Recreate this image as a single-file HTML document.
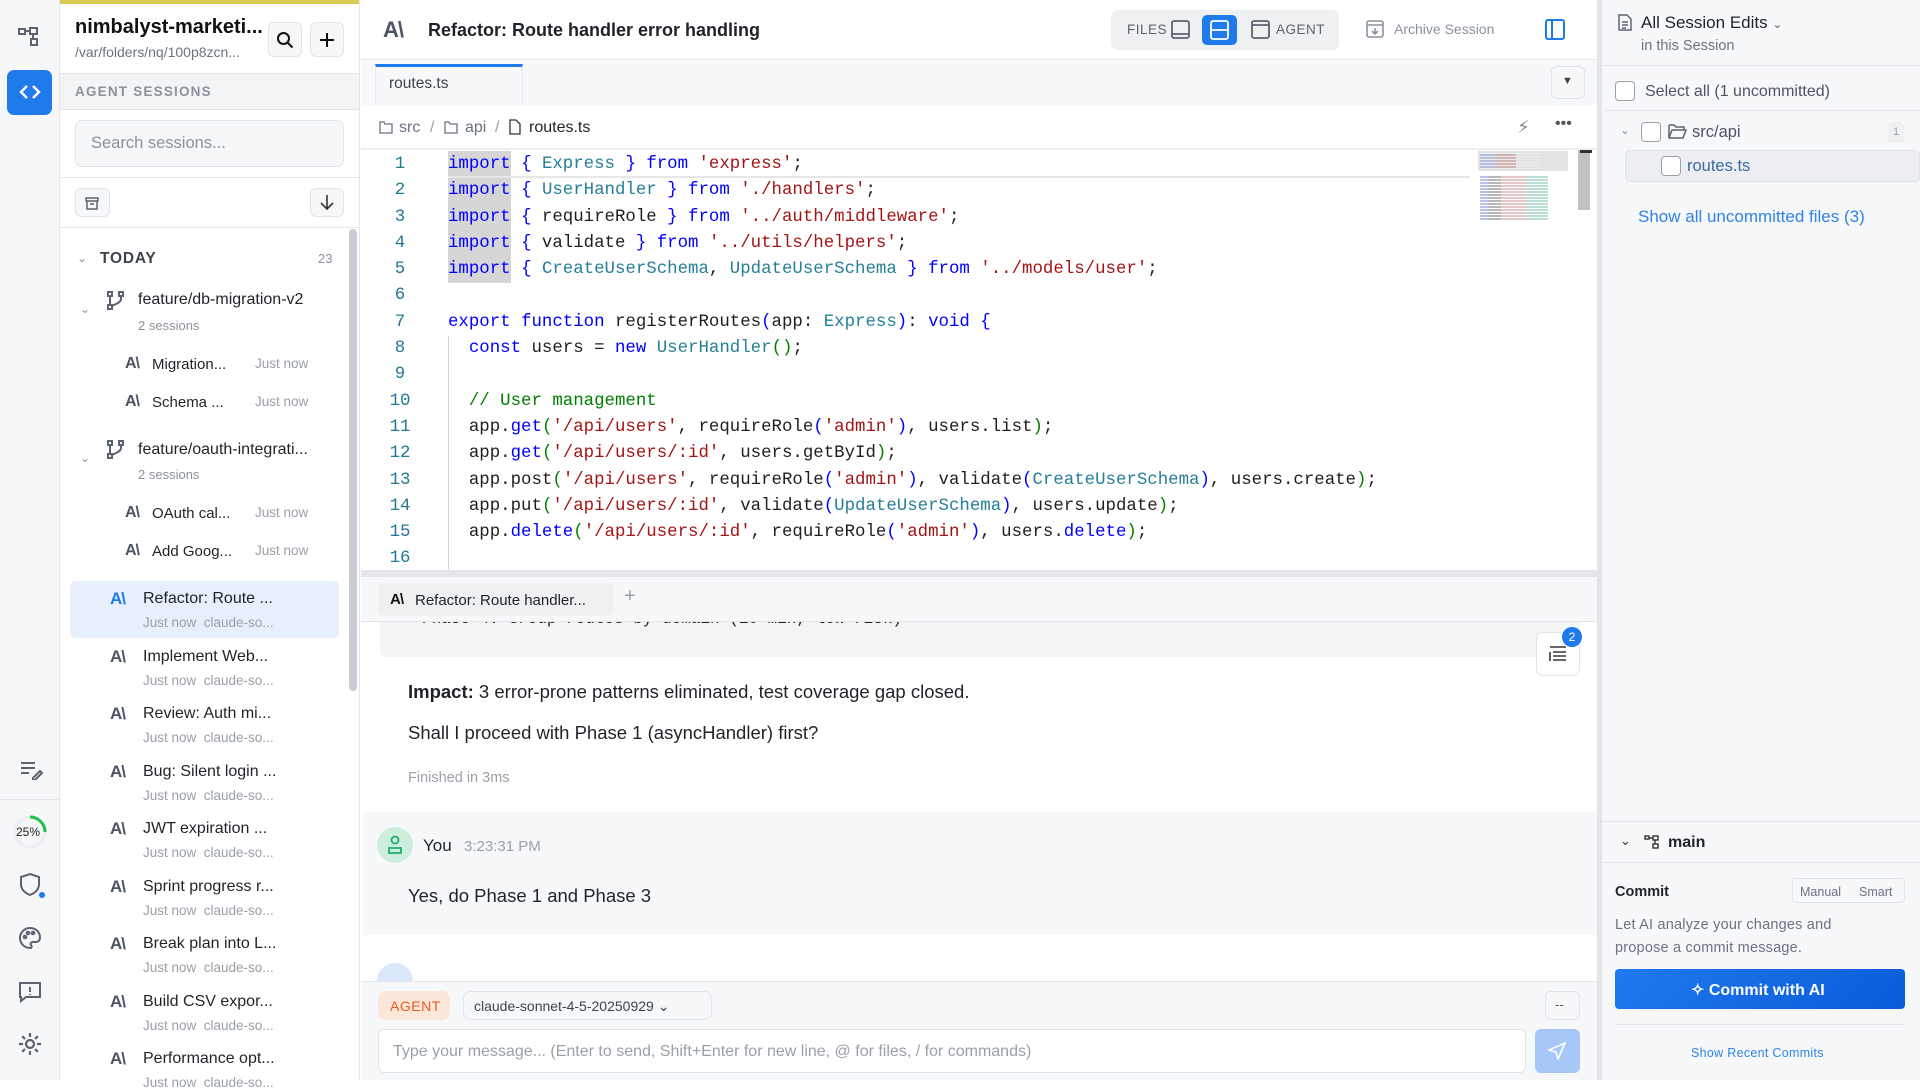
<!DOCTYPE html>
<html><head><meta charset="utf-8"><style>
*{box-sizing:border-box;margin:0;padding:0}
body{width:1920px;height:1080px;overflow:hidden;font-family:"Liberation Sans",sans-serif;color:#1f2328;background:#fff;position:relative}
.a{position:absolute}
.t{position:absolute;white-space:nowrap}
.anth{font-weight:bold;letter-spacing:-1px;color:#4b5563}
.code{font-family:"Liberation Mono",monospace;font-size:17.4px;color:#1f1f1f}
.k{color:#0000ff}.s{color:#a31515}.ty{color:#267f99}.c{color:#008000}.ln{color:#237893}
.btn{position:absolute;border:1px solid #e1e4e8;border-radius:6px;background:#f6f7f9}
.gray{color:#8b929c}
</style></head><body>
<!-- left rail -->
<div class="a" style="left:0;top:0;width:60px;height:1080px;background:#f6f7f9;border-right:1px solid #e3e5e8"></div>
<svg class="a" style="left:18px;top:26px" width="24" height="22" viewBox="0 0 24 22" fill="none" stroke="#5b6270" stroke-width="2"><rect x="1" y="3" width="6" height="5"/><rect x="12" y="2" width="7" height="6"/><rect x="13" y="13" width="6" height="6"/><path d="M7 5h5M15 8v5"/></svg>
<div class="a" style="left:7px;top:70px;width:45px;height:45px;background:#1f7aec;border-radius:7px"></div>
<svg class="a" style="left:19px;top:82px" width="22" height="20" viewBox="0 0 22 20" fill="none" stroke="#fff" stroke-width="2.4"><path d="M8 4l-6 6 6 6M14 4l6 6-6 6"/></svg>
<svg class="a" style="left:19px;top:760px" width="24" height="20" viewBox="0 0 24 20" fill="none" stroke="#5b6270" stroke-width="2"><path d="M2 3h14M2 8h14M2 13h8M14 18l7-7 2 2-7 7h-2z"/></svg>
<div class="a" style="left:0;top:799px;width:60px;height:1px;background:#e3e5e8"></div>
<svg class="a" style="left:12px;top:814px" width="36" height="36" viewBox="0 0 36 36"><circle cx="18" cy="18" r="15" fill="none" stroke="#eceef1" stroke-width="3"/><path d="M18 3a15 15 0 0 1 15 15" fill="none" stroke="#1fbf4a" stroke-width="3"/></svg>
<div class="t" style="left:16px;top:825px;font-size:12px;color:#222">25%</div>
<svg class="a" style="left:19px;top:872px" width="24" height="26" viewBox="0 0 24 26" fill="none" stroke="#5b6270" stroke-width="2"><path d="M11 2l9 3v7c0 6-4 9-9 11-5-2-9-5-9-11V5z"/></svg>
<div class="a" style="left:39px;top:892px;width:6px;height:6px;border-radius:50%;background:#1f7aec"></div>
<svg class="a" style="left:18px;top:926px" width="24" height="24" viewBox="0 0 24 24" fill="none" stroke="#5b6270" stroke-width="2"><path d="M12 2a10 10 0 0 0 0 20c2 0 2-2 1-3s0-3 2-3h3a4 4 0 0 0 4-4c0-6-4-10-10-10z"/><circle cx="7" cy="11" r="1.3"/><circle cx="10" cy="7" r="1.3"/><circle cx="15" cy="7" r="1.3"/></svg>
<svg class="a" style="left:18px;top:980px" width="24" height="24" viewBox="0 0 24 24" fill="none" stroke="#5b6270" stroke-width="2"><path d="M2 3h20v14H8l-5 4v-4H2z"/><path d="M12 7v5M12 14v1"/></svg>
<svg class="a" style="left:18px;top:1032px" width="24" height="24" viewBox="0 0 24 24" fill="none" stroke="#5b6270" stroke-width="2.2"><circle cx="12" cy="12" r="4"/><path d="M12 1v4M12 19v4M1 12h4M19 12h4M4.2 4.2l2.8 2.8M17 17l2.8 2.8M4.2 19.8L7 17M17 7l2.8-2.8"/></svg>

<!-- sidebar -->
<div class="a" style="left:60px;top:0;width:300px;height:1080px;background:#fff;border-right:1px solid #e3e5e8"></div>
<div class="a" style="left:60px;top:0;width:299px;height:4px;background:#d8cc55"></div>
<div class="t" style="left:75px;top:16px;font-size:20px;font-weight:bold;color:#111">nimbalyst-marketi...</div>
<div class="t" style="left:75px;top:44px;font-size:14px;color:#6b7280">/var/folders/nq/100p8zcn...</div>
<div class="btn" style="left:268px;top:22px;width:34px;height:35px"></div>
<svg class="a" style="left:276px;top:31px" width="18" height="18" viewBox="0 0 18 18" fill="none" stroke="#111" stroke-width="2"><circle cx="7.5" cy="7.5" r="5.5"/><path d="M11.5 11.5l5 5"/></svg>
<div class="btn" style="left:310px;top:22px;width:34px;height:35px"></div>
<svg class="a" style="left:318px;top:31px" width="18" height="18" viewBox="0 0 18 18" stroke="#111" stroke-width="2"><path d="M9 2v14M2 9h14"/></svg>
<div class="a" style="left:60px;top:73px;width:299px;height:37px;background:#f3f4f6;border-top:1px solid #e3e5e8;border-bottom:1px solid #e3e5e8"></div>
<div class="t" style="left:75px;top:84px;font-size:13.5px;font-weight:bold;color:#8b929c;letter-spacing:1.2px">AGENT SESSIONS</div>
<div class="a" style="left:75px;top:120px;width:269px;height:47px;border:1px solid #e1e4e8;border-radius:7px;background:#f6f7f9"></div>
<div class="t" style="left:91px;top:134px;font-size:16.5px;color:#8b929c">Search sessions...</div>
<div class="a" style="left:60px;top:177px;width:299px;height:1px;background:#e3e5e8"></div>
<div class="btn" style="left:75px;top:188px;width:35px;height:29px"></div>
<svg class="a" style="left:85px;top:196px" width="14" height="14" viewBox="0 0 14 14" fill="none" stroke="#5b6270" stroke-width="1.5"><path d="M1 2h12v3H1zM2 5v8h10V5M5 8h4"/></svg>
<div class="btn" style="left:310px;top:188px;width:34px;height:29px"></div>
<svg class="a" style="left:319px;top:194px" width="16" height="17" viewBox="0 0 16 17" fill="none" stroke="#333" stroke-width="1.6"><path d="M8 1v14M2 9l6 6 6-6"/></svg>
<div class="a" style="left:60px;top:227px;width:299px;height:1px;background:#e3e5e8"></div>
<div class="a" style="left:349px;top:229px;width:8px;height:462px;background:#c9cdd3;border-radius:4px"></div>

<div class="t" style="left:77px;top:251px;font-size:12px;color:#8b929c">⌄</div>
<div class="t" style="left:100px;top:250px;font-size:15.5px;font-weight:bold;color:#3d434c;letter-spacing:.8px">TODAY</div>
<div class="t" style="left:318px;top:251px;font-size:13px;color:#8b929c">23</div>

<svg class="a" style="left:107px;top:291px" width="18" height="19" viewBox="0 0 18 19" fill="none" stroke="#5b6270" stroke-width="2"><rect x="1" y="1" width="4" height="4"/><rect x="12" y="1" width="4" height="4"/><rect x="1" y="14" width="4" height="4"/><path d="M3 5v9M14 5v3c0 3-3 4-9 7"/></svg>
<div class="t" style="left:80px;top:302px;font-size:12px;color:#8b929c">⌄</div>
<div class="t" style="left:138px;top:291px;font-size:16px;color:#1f2328">feature/db-migration-v2</div>
<div class="t" style="left:138px;top:318px;font-size:13px;color:#8b929c">2 sessions</div>
<div class="t anth" style="left:125px;top:355px;font-size:16px">A\</div>
<div class="t" style="left:152px;top:356px;font-size:15px">Migration...</div>
<div class="t" style="left:255px;top:356px;font-size:13.5px;color:#9aa0a8">Just now</div>
<div class="t anth" style="left:125px;top:393px;font-size:16px">A\</div>
<div class="t" style="left:152px;top:394px;font-size:15px">Schema ...</div>
<div class="t" style="left:255px;top:394px;font-size:13.5px;color:#9aa0a8">Just now</div>

<svg class="a" style="left:107px;top:440px" width="18" height="19" viewBox="0 0 18 19" fill="none" stroke="#5b6270" stroke-width="2"><rect x="1" y="1" width="4" height="4"/><rect x="12" y="1" width="4" height="4"/><rect x="1" y="14" width="4" height="4"/><path d="M3 5v9M14 5v3c0 3-3 4-9 7"/></svg>
<div class="t" style="left:80px;top:451px;font-size:12px;color:#8b929c">⌄</div>
<div class="t" style="left:138px;top:441px;font-size:16px;color:#1f2328">feature/oauth-integrati...</div>
<div class="t" style="left:138px;top:467px;font-size:13px;color:#8b929c">2 sessions</div>
<div class="t anth" style="left:125px;top:504px;font-size:16px">A\</div>
<div class="t" style="left:152px;top:505px;font-size:15px">OAuth cal...</div>
<div class="t" style="left:255px;top:505px;font-size:13.5px;color:#9aa0a8">Just now</div>
<div class="t anth" style="left:125px;top:542px;font-size:16px">A\</div>
<div class="t" style="left:152px;top:543px;font-size:15px">Add Goog...</div>
<div class="t" style="left:255px;top:543px;font-size:13.5px;color:#9aa0a8">Just now</div>

<div class="a" style="left:70px;top:581px;width:269px;height:57px;background:#e7effc;border-radius:6px"></div>
<div id="list"></div>

<!-- main header -->
<div class="a" style="left:361px;top:59px;width:1236px;height:1px;background:#e3e5e8"></div>
<div class="t anth" style="left:383px;top:17px;font-size:22px;color:#4b5563">A\</div>
<div class="t" style="left:428px;top:20px;font-size:18px;font-weight:bold;color:#1f2328">Refactor: Route handler error handling</div>
<div class="a" style="left:1111px;top:10px;width:228px;height:40px;background:#eff0f2;border-radius:7px"></div>
<div class="t" style="left:1127px;top:22px;font-size:13.5px;color:#5b6270;letter-spacing:.5px">FILES</div>
<svg class="a" style="left:1171px;top:20px" width="19" height="19" viewBox="0 0 19 19" fill="none" stroke="#5b6270" stroke-width="1.8"><rect x="1" y="1" width="17" height="17" rx="2"/><path d="M1 14h17"/></svg>
<div class="a" style="left:1202px;top:15px;width:35px;height:30px;background:#1f7aec;border-radius:5px"></div>
<svg class="a" style="left:1210px;top:20px" width="19" height="20" viewBox="0 0 19 20" fill="none" stroke="#fff" stroke-width="1.8"><rect x="1" y="1" width="17" height="18" rx="2"/><path d="M1 10h17"/></svg>
<svg class="a" style="left:1251px;top:20px" width="19" height="19" viewBox="0 0 19 19" fill="none" stroke="#5b6270" stroke-width="1.8"><rect x="1" y="1" width="17" height="17" rx="2"/><path d="M1 5h17"/></svg>
<div class="t" style="left:1276px;top:22px;font-size:13.5px;color:#5b6270;letter-spacing:.5px">AGENT</div>
<svg class="a" style="left:1366px;top:20px" width="18" height="18" viewBox="0 0 18 18" fill="none" stroke="#8b929c" stroke-width="1.6"><rect x="1" y="1" width="16" height="16" rx="2"/><path d="M1 5h16M9 8v6M6 11l3 3 3-3"/></svg>
<div class="t" style="left:1394px;top:21px;font-size:14px;color:#8b929c">Archive Session</div>
<svg class="a" style="left:1545px;top:19px" width="20" height="21" viewBox="0 0 20 21" fill="none" stroke="#1f7aec" stroke-width="2"><rect x="1" y="1" width="18" height="19" rx="2"/><path d="M7 1v19"/></svg>

<!-- tab bar -->
<div class="a" style="left:361px;top:60px;width:1236px;height:45px;background:#f7f8fa"></div>
<div class="a" style="left:375px;top:64px;width:148px;height:41px;background:#f7f8fa;border-top:3px solid #1f7aec;border-left:1px solid #e8eaed;border-right:1px solid #e8eaed"></div>
<div class="t" style="left:389px;top:75px;font-size:15.5px;color:#3d434c">routes.ts</div>
<div class="btn" style="left:1551px;top:66px;width:34px;height:33px;background:#f7f8fa"></div>
<div class="t" style="left:1562px;top:75px;font-size:11px;color:#444">▼</div>
<!-- breadcrumb -->
<svg class="a" style="left:379px;top:120px" width="14" height="14" viewBox="0 0 14 14" fill="none" stroke="#6b7280" stroke-width="1.3"><path d="M1 2h4l1 2h7v9H1z"/></svg>
<div class="t" style="left:399px;top:119px;font-size:16px;color:#6b7280">src</div>
<div class="t" style="left:430px;top:119px;font-size:16px;color:#9aa0a8">/</div>
<svg class="a" style="left:444px;top:120px" width="14" height="14" viewBox="0 0 14 14" fill="none" stroke="#6b7280" stroke-width="1.3"><path d="M1 2h4l1 2h7v9H1z"/></svg>
<div class="t" style="left:465px;top:119px;font-size:16px;color:#6b7280">api</div>
<div class="t" style="left:495px;top:119px;font-size:16px;color:#9aa0a8">/</div>
<svg class="a" style="left:509px;top:119px" width="12" height="16" viewBox="0 0 12 16" fill="none" stroke="#333" stroke-width="1.3"><path d="M1 1h6l4 4v10H1z"/></svg>
<div class="t" style="left:529px;top:119px;font-size:16px;color:#1f2328">routes.ts</div>
<div class="t" style="left:1517px;top:117px;font-size:18px;color:#888">⚡︎</div>
<div class="t" style="left:1555px;top:115px;font-size:16px;color:#555">•••</div>
<div class="a" style="left:361px;top:148px;width:1236px;height:2px;background:#eceef1"></div>

<!-- code -->
<div class="a" style="left:448px;top:151px;width:63px;height:132px;background:#d6d6d6"></div>
<div class="a" style="left:448px;top:176px;width:1022px;height:2px;background:#e6e6e6"></div>
<div class="a" style="left:448px;top:336px;width:1px;height:234px;background:#d8d8d8"></div>
<div class="code a" style="left:380px;top:152px;line-height:26.3px">
<div class="ln" style="position:absolute;left:0;width:40px;text-align:center">1<br>2<br>3<br>4<br>5<br>6<br>7<br>8<br>9<br>10<br>11<br>12<br>13<br>14<br>15<br>16</div>
<pre class="code" style="position:absolute;left:68px;top:0;line-height:26.3px;margin:0"><span class="k">import</span> <span class="k">{</span> <span class="ty">Express</span> <span class="k">}</span> <span class="k">from</span> <span class="s">'express'</span>;
<span class="k">import</span> <span class="k">{</span> <span class="ty">UserHandler</span> <span class="k">}</span> <span class="k">from</span> <span class="s">'./handlers'</span>;
<span class="k">import</span> <span class="k">{</span> requireRole <span class="k">}</span> <span class="k">from</span> <span class="s">'../auth/middleware'</span>;
<span class="k">import</span> <span class="k">{</span> validate <span class="k">}</span> <span class="k">from</span> <span class="s">'../utils/helpers'</span>;
<span class="k">import</span> <span class="k">{</span> <span class="ty">CreateUserSchema</span>, <span class="ty">UpdateUserSchema</span> <span class="k">}</span> <span class="k">from</span> <span class="s">'../models/user'</span>;

<span class="k">export</span> <span class="k">function</span> registerRoutes<span class="k">(</span>app: <span class="ty">Express</span><span class="k">)</span>: <span class="k">void</span> <span class="k">{</span>
  <span class="k">const</span> users = <span class="k">new</span> <span class="ty">UserHandler</span><span class="c">()</span>;

  <span class="c">// User management</span>
  app.<span class="k">get</span><span class="c">(</span><span class="s">'/api/users'</span>, requireRole<span class="k">(</span><span class="s">'admin'</span><span class="k">)</span>, users.list<span class="c">)</span>;
  app.<span class="k">get</span><span class="c">(</span><span class="s">'/api/users/:id'</span>, users.getById<span class="c">)</span>;
  app.post<span class="c">(</span><span class="s">'/api/users'</span>, requireRole<span class="k">(</span><span class="s">'admin'</span><span class="k">)</span>, validate<span class="k">(</span><span class="ty">CreateUserSchema</span><span class="k">)</span>, users.create<span class="c">)</span>;
  app.put<span class="c">(</span><span class="s">'/api/users/:id'</span>, validate<span class="k">(</span><span class="ty">UpdateUserSchema</span><span class="k">)</span>, users.update<span class="c">)</span>;
  app.<span class="k">delete</span><span class="c">(</span><span class="s">'/api/users/:id'</span>, requireRole<span class="k">(</span><span class="s">'admin'</span><span class="k">)</span>, users.<span class="k">delete</span><span class="c">)</span>;
</pre></div>
<!-- minimap -->
<div class="a" style="left:1478px;top:151px;width:90px;height:20px;background:#e3e3e3"></div>
<div class="a" style="left:1480px;top:153px;width:60px;height:16px;opacity:.35;background:repeating-linear-gradient(#fff 0 1px,transparent 1px 3px),linear-gradient(90deg,#6a7ad8 0 25%,#b06060 25% 60%,transparent 60%)"></div>
<div class="a" style="left:1480px;top:175px;width:85px;height:45px;opacity:.35;background:repeating-linear-gradient(#fff 0 1px,transparent 1px 3px),linear-gradient(90deg,#3a4ad8 0 10%,#333 10% 25%,#b06060 25% 55%,#3aa080 55% 80%,transparent 80%)"></div>
<div class="a" style="left:1578px;top:150px;width:12px;height:60px;background:#c1c1c1"></div>
<div class="a" style="left:1580px;top:150px;width:12px;height:3px;background:#333"></div>

<!-- splitter -->
<div class="a" style="left:361px;top:570px;width:1236px;height:7px;background:#e3e5e8"></div>
<!-- chat tab bar -->
<div class="a" style="left:361px;top:577px;width:1236px;height:45px;background:#f7f8fa;border-bottom:1px solid #e3e5e8"></div>
<div class="a" style="left:378px;top:583px;width:235px;height:33px;background:#eff0f2;border-radius:5px"></div>
<div class="t anth" style="left:390px;top:591px;font-size:15px;color:#111">A\</div>
<div class="t" style="left:415px;top:592px;font-size:15px;color:#1f2328">Refactor: Route handler...</div>
<div class="t" style="left:624px;top:585px;font-size:20px;color:#9aa0a8">+</div>
<!-- chat body -->
<div class="a" style="left:380px;top:622px;width:1200px;height:35px;background:#f3f4f6;border-radius:0 0 6px 6px;overflow:hidden"><div class="t code" style="left:42px;top:-12px;font-size:16px">Phase 4: Group routes by domain (10 min, low risk)</div></div>
<div class="a" style="left:1536px;top:632px;width:44px;height:44px;background:#fff;border:1px solid #e1e4e8;border-radius:7px"></div>
<svg class="a" style="left:1549px;top:645px" width="18" height="18" viewBox="0 0 18 18" stroke="#333" stroke-width="1.6"><path d="M1 2h16M4 7h13M4 11h13M4 15h13M1 7v9"/></svg>
<div class="a" style="left:1562px;top:627px;width:20px;height:20px;border-radius:50%;background:#1f7aec;color:#fff;font-size:12px;text-align:center;line-height:20px">2</div>
<div class="t" style="left:408px;top:681px;font-size:18.5px;color:#1f2328"><b>Impact:</b> 3 error-prone patterns eliminated, test coverage gap closed.</div>
<div class="t" style="left:408px;top:722px;font-size:18.5px;color:#1f2328">Shall I proceed with Phase 1 (asyncHandler) first?</div>
<div class="t" style="left:408px;top:770px;font-size:14.5px;color:#9aa0a8">Finished in 3ms</div>
<div class="a" style="left:363px;top:812px;width:1234px;height:123px;background:#f7f8fa"></div>
<div class="a" style="left:377px;top:827px;width:36px;height:36px;border-radius:50%;background:#cdeedd"></div>
<svg class="a" style="left:386px;top:835px" width="18" height="20" viewBox="0 0 18 20" fill="none" stroke="#1fae67" stroke-width="1.8"><circle cx="9" cy="5" r="3.5"/><path d="M3 18v-5h12v5z"/></svg>
<div class="t" style="left:423px;top:836px;font-size:17px;color:#1f2328">You</div>
<div class="t" style="left:464px;top:838px;font-size:15px;color:#9aa0a8">3:23:31 PM</div>
<div class="t" style="left:408px;top:885px;font-size:18.5px;color:#1f2328">Yes, do Phase 1 and Phase 3</div>
<div class="a" style="left:377px;top:963px;width:36px;height:18px;border-radius:18px 18px 0 0;background:#dbe7fb;overflow:hidden"></div>
<!-- input area -->
<div class="a" style="left:361px;top:981px;width:1236px;height:99px;background:#f7f8fa;border-top:1px solid #e3e5e8"></div>
<div class="a" style="left:378px;top:991px;width:72px;height:29px;background:#fde7da;border-radius:8px"></div>
<div class="t" style="left:390px;top:998px;font-size:14px;color:#ef5a1f;letter-spacing:.5px">AGENT</div>
<div class="a" style="left:463px;top:991px;width:249px;height:29px;border:1px solid #e1e4e8;border-radius:8px"></div>
<div class="t" style="left:474px;top:998px;font-size:14px;color:#3d434c">claude-sonnet-4-5-20250929 ⌄</div>
<div class="a" style="left:1545px;top:991px;width:35px;height:29px;border:1px solid #e1e4e8;border-radius:6px;background:#f7f8fa"></div>
<div class="t" style="left:1555px;top:997px;font-size:13px;color:#555">--</div>
<div class="a" style="left:378px;top:1029px;width:1148px;height:44px;border:1px solid #e1e4e8;border-radius:6px;background:#fff"></div>
<div class="t" style="left:393px;top:1043px;font-size:16px;color:#9aa0a8">Type your message... (Enter to send, Shift+Enter for new line, @ for files, / for commands)</div>
<div class="a" style="left:1535px;top:1029px;width:45px;height:44px;background:#a7c8f7;border-radius:6px"></div>
<svg class="a" style="left:1548px;top:1042px" width="18" height="18" viewBox="0 0 18 18" fill="none" stroke="#fff" stroke-width="1.6"><path d="M17 1L1 8l7 2 2 7z"/></svg>

<!-- right panel -->
<div class="a" style="left:1597px;top:0;width:323px;height:1080px;background:#f7f8fa;border-left:5px solid #e3e5e8"></div>
<svg class="a" style="left:1618px;top:14px" width="14" height="17" viewBox="0 0 14 17" fill="none" stroke="#5b6270" stroke-width="1.5"><path d="M1 1h8l4 4v11H1zM4 8h6M4 11h6M4 14h4"/></svg>
<div class="t" style="left:1641px;top:13px;font-size:17px;color:#1f2328">All Session Edits <span style="font-size:12px;color:#666">⌄</span></div>
<div class="t" style="left:1641px;top:38px;font-size:14.5px;color:#6b7280">in this Session</div>
<div class="a" style="left:1602px;top:65px;width:318px;height:1px;background:#e3e5e8"></div>
<div class="a" style="left:1615px;top:81px;width:20px;height:20px;border:1.5px solid #9aa0a8;border-radius:4px;background:#fff"></div>
<div class="t" style="left:1645px;top:83px;font-size:16px;color:#4b5563">Select all (1 uncommitted)</div>
<div class="a" style="left:1605px;top:110px;width:315px;height:1px;background:#e3e5e8"></div>
<div class="t" style="left:1620px;top:123px;font-size:12px;color:#8b929c">⌄</div>
<div class="a" style="left:1641px;top:122px;width:20px;height:20px;border:1.5px solid #9aa0a8;border-radius:4px;background:#fff"></div>
<svg class="a" style="left:1668px;top:124px" width="19" height="15" viewBox="0 0 19 15" fill="none" stroke="#5b6270" stroke-width="1.5"><path d="M1 1h5l2 2h8v3M1 1v13h14l3-8H4L1 14"/></svg>
<div class="t" style="left:1692px;top:123px;font-size:16.5px;color:#4b5563">src/api</div>
<div class="a" style="left:1888px;top:122px;width:16px;height:21px;background:#eff0f2;border-radius:4px;font-size:11px;color:#9aa0a8;text-align:center;line-height:21px">1</div>
<div class="a" style="left:1625px;top:150px;width:295px;height:32px;background:#eceef1;border-radius:4px;border:1px solid #e1e4e8"></div>
<div class="a" style="left:1661px;top:156px;width:20px;height:20px;border:1.5px solid #9aa0a8;border-radius:4px;background:#fff"></div>
<div class="t" style="left:1687px;top:157px;font-size:16.5px;color:#3a6aa8">routes.ts</div>
<div class="t" style="left:1638px;top:207px;font-size:17px;color:#2f83e6">Show all uncommitted files (3)</div>
<div class="a" style="left:1602px;top:821px;width:318px;height:1px;background:#e3e5e8"></div>
<div class="t" style="left:1620px;top:833px;font-size:13px;color:#333">⌄</div>
<svg class="a" style="left:1644px;top:835px" width="16" height="14" viewBox="0 0 16 14" fill="none" stroke="#333" stroke-width="1.4"><rect x="1" y="1" width="4" height="3"/><rect x="9" y="1" width="5" height="4"/><rect x="9" y="9" width="5" height="4"/><path d="M5 3h4M11 5v4"/></svg>
<div class="t" style="left:1668px;top:834px;font-size:16px;font-weight:bold;color:#1f2328">main</div>
<div class="a" style="left:1602px;top:862px;width:318px;height:1px;background:#e3e5e8"></div>
<div class="t" style="left:1615px;top:884px;font-size:14.5px;font-weight:bold;color:#1f2328">Commit</div>
<div class="a" style="left:1792px;top:878px;width:113px;height:25px;border:1px solid #e1e4e8;border-radius:4px;background:#f7f8fa"></div>
<div class="t" style="left:1800px;top:885px;font-size:12.5px;color:#6b7280">Manual</div>
<div class="t" style="left:1859px;top:885px;font-size:12.5px;color:#6b7280">Smart</div>
<div class="t" style="left:1615px;top:914px;font-size:14.5px;color:#6b7280;line-height:23px;white-space:normal;width:250px;letter-spacing:.2px">Let AI analyze your changes and propose a commit message.</div>
<div class="a" style="left:1615px;top:969px;width:290px;height:40px;background:linear-gradient(135deg,#2079ee,#0a5bd8);border-radius:4px"></div>
<div class="t" style="left:1691px;top:980px;font-size:16px;color:#fff;font-weight:bold">✧ Commit with AI</div>
<div class="a" style="left:1615px;top:1024px;width:290px;height:1px;background:#e3e5e8"></div>
<div class="t" style="left:1691px;top:1046px;font-size:12.5px;color:#2f83e6;letter-spacing:.3px">Show Recent Commits</div>

<script>
var items=[["Refactor: Route ...",1],["Implement Web..."],["Review: Auth mi..."],["Bug: Silent login ..."],["JWT expiration ..."],["Sprint progress r..."],["Break plan into L..."],["Build CSV expor..."],["Performance opt..."]];
var h="";items.forEach(function(it,i){var y=589+i*57.5;var col=it[1]?"#1f7aec":"#4b5563";
h+='<div class="t anth" style="left:110px;top:'+y+'px;font-size:17px;color:'+col+'">A\\</div>';
h+='<div class="t" style="left:143px;top:'+(y+1)+'px;font-size:16px;color:#1f2328">'+it[0]+'</div>';
h+='<div class="t" style="left:143px;top:'+(y+26)+'px;font-size:13.5px;color:#9aa0a8">Just now&nbsp; claude-so...</div>';});
document.getElementById("list").innerHTML=h;
</script>
</body></html>
